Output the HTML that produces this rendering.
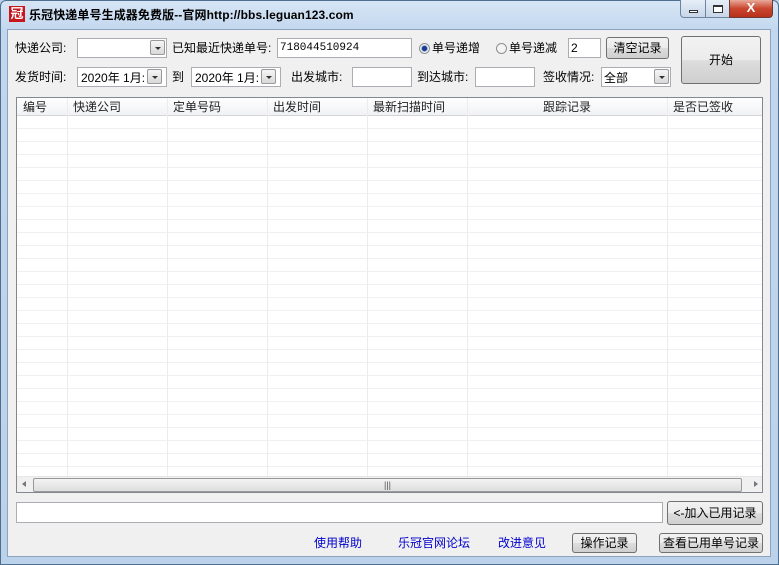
<!DOCTYPE html><html><head><meta charset="utf-8"><style>
*{box-sizing:border-box;margin:0;padding:0}
body{width:779px;height:565px;overflow:hidden;background:#bcd2ea;font-family:"Liberation Sans","Noto Sans CJK SC",sans-serif;font-size:12px;color:#000;position:relative}
.a{position:absolute}
.frame{left:0;top:0;width:779px;height:565px;border:1px solid #4f6f92;border-radius:6px 6px 0 0;background:linear-gradient(#d6e5f5,#c2d7ee 30px,#bcd2ea)}
.client{left:7px;top:29px;width:764px;height:528px;background:#f0f0f0;border:1px solid #8ba3bf}
.t{white-space:nowrap;line-height:14px}
.in{background:#fff;border:1px solid #abadb3}
.btn{border:1px solid #707070;border-radius:3px;background:linear-gradient(#f2f2f2,#ebebeb 50%,#dddddd 51%,#cfcfcf);text-align:center;white-space:nowrap}
.dd{width:15px;height:15px;border:1px solid #999;border-radius:2px;background:linear-gradient(#f5f5f5,#d9d9d9)}
.dd:after{content:"";position:absolute;left:4px;top:6px;border:3px solid transparent;border-top:3px solid #333;border-bottom:0}
.radio{width:11px;height:11px;border-radius:50%;border:1px solid #8e8f8f;background:#f4f4f4}
.hd{color:#222}
</style></head><body>
<div class="a frame"></div>
<div class="a" style="left:9px;top:6px;width:16px;height:16px;background:#c8161d;color:#fff;font-size:13px;line-height:16px;text-align:center;font-weight:bold">冠</div>
<div class="a t" style="left:29px;top:8px;font-size:12px;font-weight:bold;letter-spacing:0.1px">乐冠快递单号生成器免费版--官网http://bbs.leguan123.com</div>
<div class="a" style="left:680px;top:0px;width:26px;height:18px;border:1px solid #6d84a0;border-top:0;border-radius:0 0 0 4px;background:linear-gradient(#e6eef8,#c7d6e8)"><div class="a" style="left:8px;top:10px;width:9px;height:3px;border:1px solid #333;background:#fff"></div></div>
<div class="a" style="left:705px;top:0px;width:25px;height:18px;border:1px solid #6d84a0;border-top:0;background:linear-gradient(#e6eef8,#c7d6e8)"><div class="a" style="left:7px;top:5px;width:10px;height:8px;border:1px solid #333;border-top-width:2px;background:#fff"></div></div>
<div class="a" style="left:729px;top:0px;width:44px;height:18px;border:1px solid #6d3a35;border-top:0;border-radius:0 0 4px 0;background:linear-gradient(#e9a99a,#c9462f 50%,#b8301b);color:#fff;font-weight:bold;text-align:center;line-height:16px;font-size:13px">X</div>
<div class="a client"></div>

<div class="a t" style="left:15px;top:41px">快递公司:</div>
<div class="a in" style="left:77px;top:38px;width:90px;height:20px"></div>
<div class="a dd" style="left:150px;top:40px"></div>
<div class="a t" style="left:172px;top:41px">已知最近快递单号:</div>
<div class="a in" style="left:277px;top:38px;width:135px;height:20px"><span class="a t" style="left:2px;top:2px;font-family:'Liberation Mono',monospace;font-size:11px">718044510924</span></div>
<div class="a radio" style="left:419px;top:43px;background:radial-gradient(circle,#1b3a8a 35%,#8ab0e0 45%,#f4f4f4 60%)"></div>
<div class="a t" style="left:432px;top:41px">单号递增</div>
<div class="a radio" style="left:496px;top:43px"></div>
<div class="a t" style="left:509px;top:41px">单号递减</div>
<div class="a in" style="left:568px;top:38px;width:33px;height:20px"><span class="a t" style="left:2px;top:2px">2</span></div>
<div class="a btn" style="left:606px;top:37px;width:63px;height:22px;line-height:20px">清空记录</div>
<div class="a btn" style="left:681px;top:36px;width:80px;height:48px;line-height:46px">开始</div>

<div class="a t" style="left:15px;top:70px">发货时间:</div>
<div class="a in" style="left:77px;top:67px;width:90px;height:20px"><span class="a t" style="left:3px;top:3px">2020年 1月:</span></div>
<div class="a dd" style="left:147px;top:69px"></div>
<div class="a t" style="left:172px;top:70px">到</div>
<div class="a in" style="left:191px;top:67px;width:90px;height:20px"><span class="a t" style="left:3px;top:3px">2020年 1月:</span></div>
<div class="a dd" style="left:261px;top:69px"></div>
<div class="a t" style="left:291px;top:70px">出发城市:</div>
<div class="a in" style="left:352px;top:67px;width:60px;height:20px"></div>
<div class="a t" style="left:417px;top:70px">到达城市:</div>
<div class="a in" style="left:475px;top:67px;width:60px;height:20px"></div>
<div class="a t" style="left:543px;top:70px">签收情况:</div>
<div class="a in" style="left:601px;top:67px;width:70px;height:20px"><span class="a t" style="left:2px;top:3px">全部</span></div>
<div class="a dd" style="left:654px;top:69px"></div>

<div class="a" style="left:16px;top:97px;width:747px;height:396px;background:#fff;border:1px solid #828790;overflow:hidden">
<div class="a" style="left:0;top:0;width:747px;height:18px;background:linear-gradient(#fff,#f7f8fa 50%,#f1f2f4);border-bottom:1px solid #d5d5d5"></div>
<div class="a" style="left:0;top:18px;width:747px;height:360px;background:repeating-linear-gradient(#fff 0,#fff 12px,#f0f0f0 12px,#f0f0f0 13px)"></div>
<div class="a" style="left:50px;top:0;width:1px;height:380px;background:#ececec"></div>
<div class="a" style="left:150px;top:0;width:1px;height:380px;background:#ececec"></div>
<div class="a" style="left:250px;top:0;width:1px;height:380px;background:#ececec"></div>
<div class="a" style="left:350px;top:0;width:1px;height:380px;background:#ececec"></div>
<div class="a" style="left:450px;top:0;width:1px;height:380px;background:#ececec"></div>
<div class="a" style="left:650px;top:0;width:1px;height:380px;background:#ececec"></div>
<span class="a t hd" style="left:6px;top:2px">编号</span>
<span class="a t hd" style="left:56px;top:2px">快递公司</span>
<span class="a t hd" style="left:156px;top:2px">定单号码</span>
<span class="a t hd" style="left:256px;top:2px">出发时间</span>
<span class="a t hd" style="left:356px;top:2px">最新扫描时间</span>
<span class="a t hd" style="left:526px;top:2px">跟踪记录</span>
<span class="a t hd" style="left:656px;top:2px">是否已签收</span>
<div class="a" style="left:0;top:378px;width:747px;height:17px;background:#f0f0f0;border-top:1px solid #e6e6e6">
<div class="a" style="left:5px;top:4px;border:3px solid transparent;border-right:4px solid #777;border-left:0"></div>
<div class="a" style="left:16px;top:1px;width:709px;height:14px;border:1px solid #999;border-radius:2px;background:linear-gradient(#f3f3f3,#dedede);text-align:center;font-size:9px;line-height:12px;color:#555">|||</div>
<div class="a" style="left:737px;top:4px;border:3px solid transparent;border-left:4px solid #777;border-right:0"></div>
</div>
</div>

<div class="a in" style="left:16px;top:502px;width:647px;height:21px"></div>
<div class="a btn" style="left:667px;top:501px;width:96px;height:24px;line-height:22px">&lt;-加入已用记录</div>
<div class="a t" style="left:314px;top:536px;color:#0000cc">使用帮助</div>
<div class="a t" style="left:398px;top:536px;color:#0000cc">乐冠官网论坛</div>
<div class="a t" style="left:498px;top:536px;color:#0000cc">改进意见</div>
<div class="a btn" style="left:572px;top:533px;width:65px;height:20px;line-height:18px">操作记录</div>
<div class="a btn" style="left:659px;top:533px;width:104px;height:20px;line-height:18px">查看已用单号记录</div>
</body></html>
